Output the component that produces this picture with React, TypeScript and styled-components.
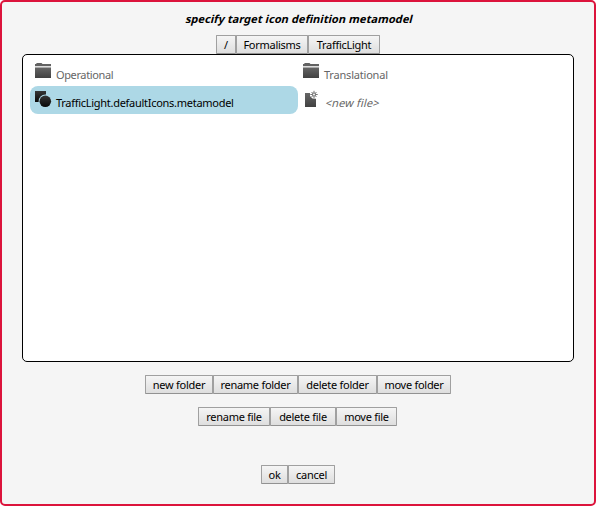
import React from 'react';
import styled, { createGlobalStyle } from 'styled-components';

const GlobalStyle = createGlobalStyle`
  *, *::before, *::after { box-sizing: border-box; }
  body { margin: 0; background: #fff; }
`;

const Dialog = styled.main`
  width: 596px;
  height: 506px;
  padding: 9px 20px 0;
  border: 2px solid crimson;
  border-radius: 5px;
  background: whitesmoke;
  color: #000;
  font: 11px/16px 'Noto Sans', sans-serif;
  display: flex;
  flex-direction: column;
`;

const Title = styled.h1`
  align-self: center;
  margin: 0 0 8px 2px;
  height: 16px;
  font-size: 11px;
  line-height: 16px;
  font-weight: 700;
  letter-spacing: 0.07px;
  white-space: nowrap;
  transform: skewX(-14deg);
`;

const ButtonRow = styled.div<{ $gap?: number; $inset?: number }>`
  display: flex;
  justify-content: center;
  height: 19px;
  margin-top: ${(p) => p.$gap ?? 0}px;
  padding-right: ${(p) => p.$inset ?? 0}px;
`;

const Button = styled.button<{ $width: number }>`
  width: ${(p) => p.$width}px;
  height: 19px;
  padding: 0;
  border: 1px solid #a0a0a0;
  border-bottom-color: #929292;
  border-radius: 1px;
  background: linear-gradient(#f5f5f5, #dedede);
  color: #000;
  font: inherit;
  line-height: 17px;
  letter-spacing: -0.27px;
  text-align: center;
  white-space: nowrap;
`;

const FileList = styled.ul`
  list-style: none;
  margin: 0;
  width: 552px;
  height: 308px;
  padding: 3px 7px;
  border: 1px solid #000;
  border-radius: 5px;
  background: #fff;
  display: grid;
  grid-template-columns: 268px 268px;
  grid-auto-rows: 28px;
  align-content: start;
`;

const Entry = styled.li<{ $selected?: boolean }>`
  display: flex;
  padding: 4px 5px 0;
  border-radius: 8px;
  background: ${(p) => (p.$selected ? 'lightblue' : 'transparent')};
  color: ${(p) => (p.$selected ? '#000' : '#666')};
`;

const Icon = styled.svg`
  flex: none;
  width: 17px;
  height: 18px;
  margin-right: 4px;
`;

const Label = styled.span<{ $slanted?: boolean; $spacing?: number }>`
  padding-top: 5px;
  white-space: nowrap;
  letter-spacing: ${(p) => p.$spacing ?? -0.28}px;
  margin-left: ${(p) => (p.$slanted ? 2 : 0)}px;
  transform: ${(p) => (p.$slanted ? 'skewX(-14deg)' : 'none')};
`;

const Gradients = () => (
  <defs>
    <linearGradient id="grey" x1="0" y1="0" x2="0" y2="1">
      <stop offset="0" stopColor="#666" />
      <stop offset="1" stopColor="#414141" />
    </linearGradient>
    <linearGradient id="dark" x1="0" y1="0" x2="0" y2="1">
      <stop offset="0" stopColor="#363636" />
      <stop offset="1" stopColor="#080808" />
    </linearGradient>
  </defs>
);

const FolderIcon = () => (
  <Icon viewBox="0 0 17 18">
    <Gradients />
    <path d="M0 4V2H1L1.8 1H6.5L7.5 2H16V4Z" fill="#626262" />
    <path d="M0 4H16V5.5H0Z" fill="#ddd" />
    <path d="M0 5.5H16V16H0Z" fill="url(#grey)" />
  </Icon>
);

const ModelIcon = () => (
  <Icon viewBox="0 0 17 18">
    <Gradients />
    <path d="M0 1H11V4.5A6.8 6.8 0 0 0 3.6 12H0Z" fill="url(#dark)" />
    <circle cx="10.3" cy="11.3" r="5.8" fill="url(#dark)" />
  </Icon>
);

const NewFileIcon = () => (
  <Icon viewBox="0 0 17 18">
    <Gradients />
    <path d="M2 3H7V6L9.5 8.5L13 8.7V17H2Z" fill="url(#grey)" />
    <path d="M11 .8V8.2M7.3 4.5H14.7M8.5 2L13.5 7M13.5 2L8.5 7" stroke="#666" strokeWidth=".9" />
    <circle cx="11" cy="4.5" r="2.1" fill="#777" />
    <circle cx="11" cy="4.5" r="1.1" fill="#eee" />
  </Icon>
);

export default function App() {
  return (
    <>
      <GlobalStyle />
      <Dialog>
        <Title>specify target icon definition metamodel</Title>
        <ButtonRow>
          <Button $width={20}>/</Button>
          <Button $width={72}>Formalisms</Button>
          <Button $width={72}>TrafficLight</Button>
        </ButtonRow>
        <FileList>
          <Entry><FolderIcon /><Label $spacing={-0.38}>Operational</Label></Entry>
          <Entry><FolderIcon /><Label $spacing={-0.2}>Translational</Label></Entry>
          <Entry $selected><ModelIcon /><Label>TrafficLight.defaultIcons.metamodel</Label></Entry>
          <Entry><NewFileIcon /><Label $slanted $spacing={0.15}>&lt;new file&gt;</Label></Entry>
        </FileList>
        <ButtonRow $gap={13}>
          <Button $width={68}>new folder</Button>
          <Button $width={85}>rename folder</Button>
          <Button $width={79}>delete folder</Button>
          <Button $width={74}>move folder</Button>
        </ButtonRow>
        <ButtonRow $gap={13} $inset={1}>
          <Button $width={72}>rename file</Button>
          <Button $width={66}>delete file</Button>
          <Button $width={61}>move file</Button>
        </ButtonRow>
        <ButtonRow $gap={39}>
          <Button $width={27}>ok</Button>
          <Button $width={47}>cancel</Button>
        </ButtonRow>
      </Dialog>
    </>
  );
}
